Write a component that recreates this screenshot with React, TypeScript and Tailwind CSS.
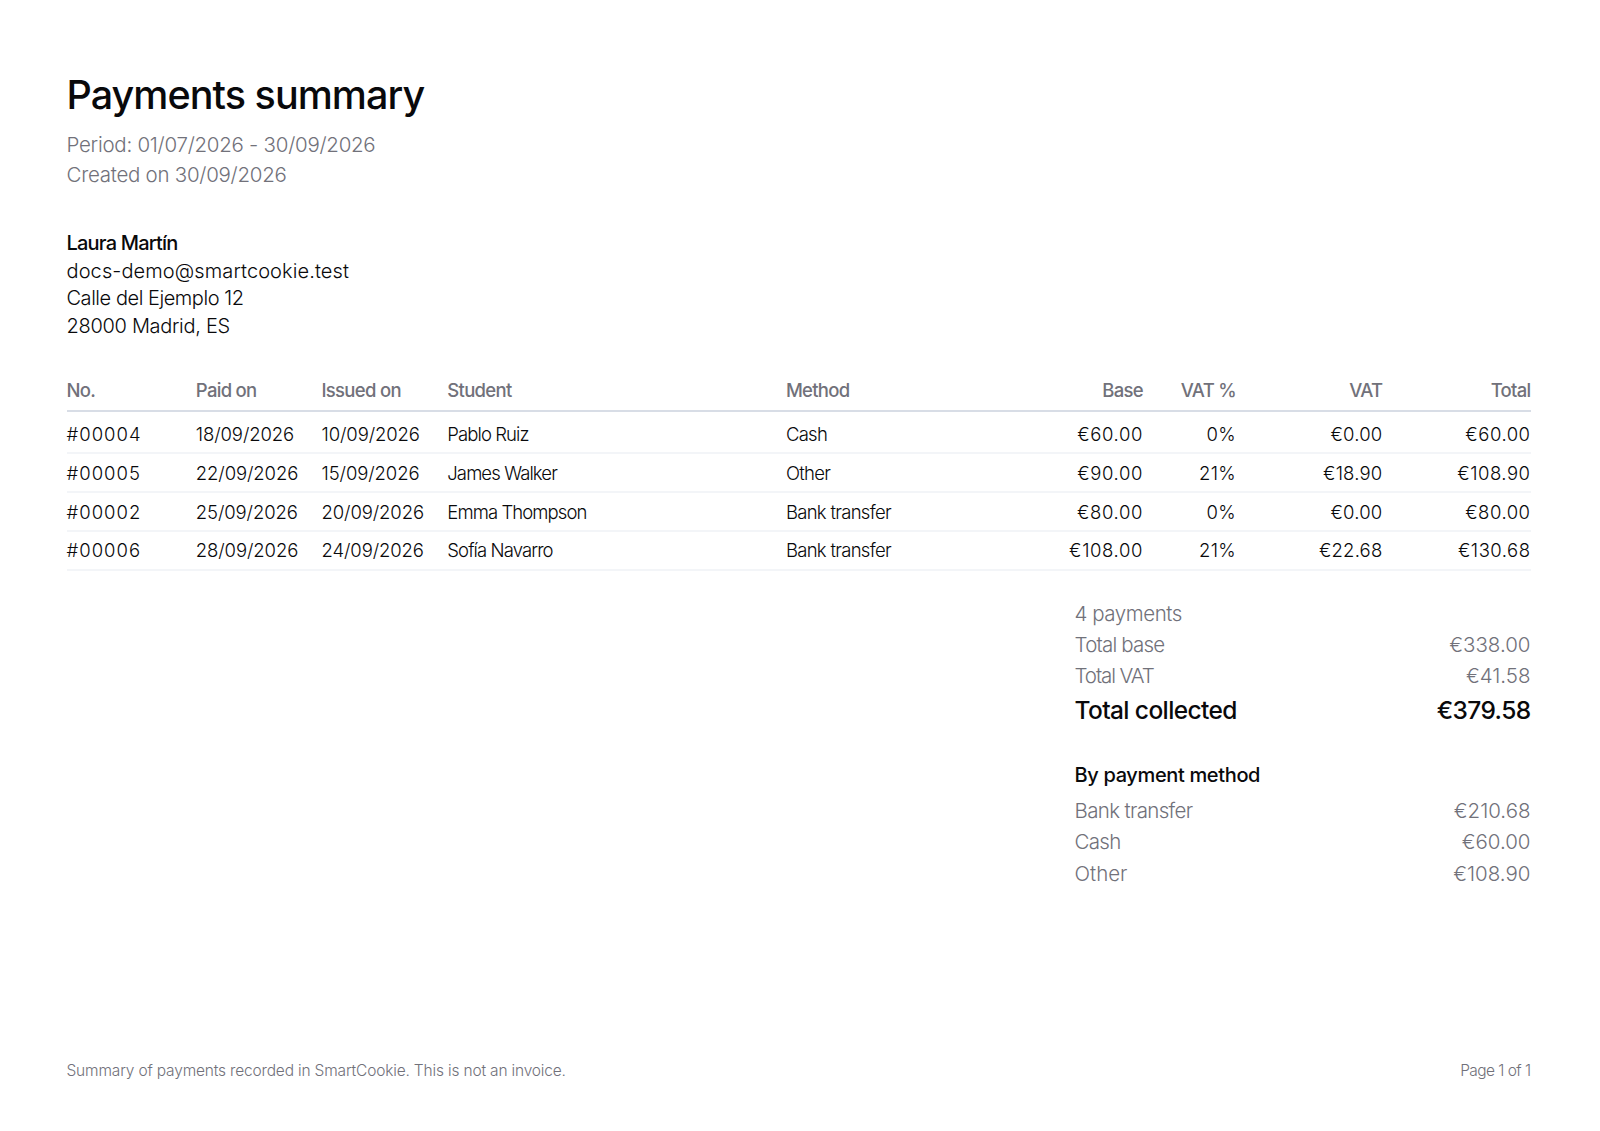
const rows = [
  ['#00004', '18/09/2026', '10/09/2026', 'Pablo Ruiz', 'Cash', '€60.00', '0%', '€0.00', '€60.00'],
  ['#00005', '22/09/2026', '15/09/2026', 'James Walker', 'Other', '€90.00', '21%', '€18.90', '€108.90'],
  ['#00002', '25/09/2026', '20/09/2026', 'Emma Thompson', 'Bank transfer', '€80.00', '0%', '€0.00', '€80.00'],
  ['#00006', '28/09/2026', '24/09/2026', 'Sofía Navarro', 'Bank transfer', '€108.00', '21%', '€22.68', '€130.68'],
]

const headers = ['No.', 'Paid on', 'Issued on', 'Student', 'Method', 'Base', 'VAT %', 'VAT', 'Total']

const cellClass = [
  'text-left tracking-[1px]',
  'text-left tracking-[-0.1px]',
  'text-left tracking-[-0.1px]',
  'text-left tracking-[-0.9px]',
  'text-left tracking-[-0.7px]',
  'text-right tracking-[0.6px]',
  'text-right tracking-[0.3px]',
  'text-right tracking-[0.2px]',
  'text-right tracking-[0.5px]',
]

const rowPad = ['pt-[5px]', 'pt-[2px]', 'pt-[2px]', 'pt-[1px]']

const totals = [
  ['Total base', '€338.00', 'tracking-[-0.8px]'],
  ['Total VAT', '€41.58', 'tracking-[-1.1px]'],
]

const methods = [
  ['Bank transfer', '€210.68', 'tracking-[-0.65px]'],
  ['Cash', '€60.00', 'tracking-[-0.7px]'],
  ['Other', '€108.90', 'tracking-normal'],
]

export default function App() {
  return (
    <div className="h-[1131px] bg-white pl-[66.5px] pr-[69.5px] pt-[65px] font-['Inter',sans-serif] font-[350] text-[#09090b] flex flex-col">
      <h1 className="text-[39.5px] leading-[60px] font-[550] tracking-[-0.95px]">Payments summary</h1>
      <div className="mt-[5px] text-[20.5px] leading-[30px] text-[#71717a] tracking-[-0.27px]">
        <p>Period: 01/07/2026 - 30/09/2026</p>
        <p>Created on 30/09/2026</p>
      </div>

      <div className="mt-[40px] text-[20px] leading-[27.6px]">
        <p className="font-[480] tracking-[-0.8px]">Laura Martín</p>
        <p className="tracking-[0.1px]">docs-demo@smartcookie.test</p>
        <p className="tracking-[-0.45px]">Calle del Ejemplo 12</p>
        <p className="tracking-[-0.3px]">28000 Madrid, ES</p>
      </div>

      <table className="mt-[32px] w-full table-fixed text-[18.5px]">
        <colgroup>
          <col className="w-[129.3px]" />
          <col className="w-[125.7px]" />
          <col className="w-[125.8px]" />
          <col className="w-[338.6px]" />
          <col className="w-[170px]" />
          <col className="w-[187.1px]" />
          <col className="w-[93px]" />
          <col className="w-[146.5px]" />
          <col className="w-[148px]" />
        </colgroup>
        <thead>
          <tr className="border-b-2 border-[#d8dde6] h-[39px]">
            {headers.map((h, i) => (
              <th key={h} className={`font-medium text-[#71717a] tracking-[-0.7px] pb-[2px] ${i > 4 ? 'text-right' : 'text-left'}`}>
                {h}
              </th>
            ))}
          </tr>
        </thead>
        <tbody>
          {rows.map((r, n) => (
            <tr key={r[0]} className={`border-b-2 border-[#f3f5f8] ${n === 0 ? 'h-[42px]' : 'h-[38.8px]'}`}>
              {r.map((c, i) => (
                <td key={i} className={`${cellClass[i]} ${rowPad[n]}`}>
                  {c}
                </td>
              ))}
            </tr>
          ))}
        </tbody>
      </table>

      <div className="ml-auto mt-[27px] w-[456px]">
        <p className="text-[20.5px] leading-[31px] text-[#71717a] tracking-[-0.45px]">4 payments</p>
        {totals.map(([k, v, t]) => (
          <div key={k} className="flex justify-between text-[20.5px] leading-[31px] text-[#71717a]">
            <span className={t}>{k}</span>
            <span>{v}</span>
          </div>
        ))}
        <div className="mt-[1.5px] flex justify-between text-[24.5px] leading-[36px] font-[550] tracking-[-0.6px]">
          <span>Total collected</span>
          <span>€379.58</span>
        </div>
        <p className="mt-[32px] text-[20px] leading-[30px] font-[550] tracking-[-0.35px]">By payment method</p>
        <div className="mt-[4.7px]">
          {methods.map(([k, v, t]) => (
            <div key={k} className="flex justify-between text-[20.5px] leading-[31.5px] text-[#71717a]">
              <span className={t}>{k}</span>
              <span>{v}</span>
            </div>
          ))}
        </div>
      </div>

      <div className="mt-[170px] flex justify-between text-[15.5px] leading-[24px] text-[#71717a]">
        <span className="tracking-[-0.17px]">Summary of payments recorded in SmartCookie. This is not an invoice.</span>
        <span className="tracking-[-0.55px]">Page 1 of 1</span>
      </div>
    </div>
  )
}
